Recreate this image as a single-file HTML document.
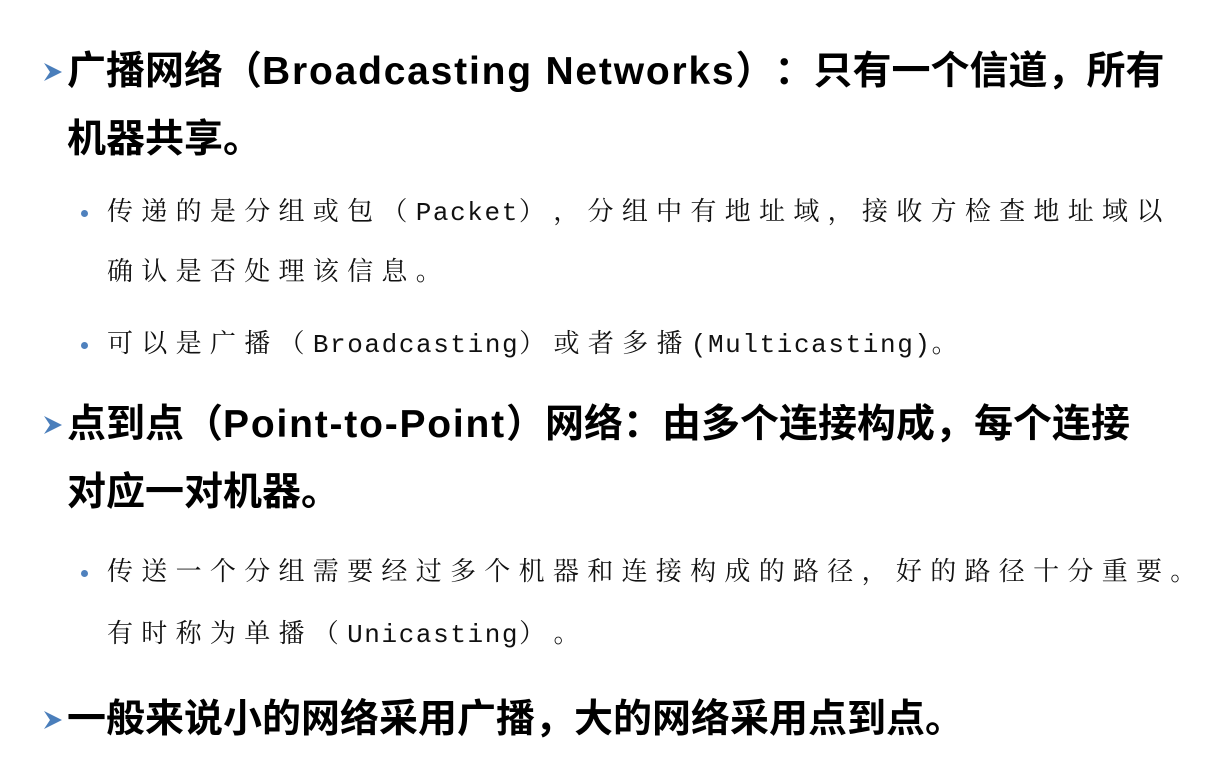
<!DOCTYPE html>
<html><head><meta charset="utf-8"><style>
body{margin:0;width:1222px;height:784px;background:#fff;position:relative;overflow:hidden}
div{text-spacing-trim:space-all}
.h{position:absolute;left:67px;font-family:"Liberation Sans","Noto Sans CJK SC",sans-serif;font-weight:bold;font-size:39px;line-height:50px;color:#000;white-space:nowrap}
.h i{font-style:normal;letter-spacing:1.8px}
.s{position:absolute;left:107px;font-family:"Liberation Mono","Noto Serif CJK SC",serif;font-size:26px;line-height:40px;letter-spacing:8.3px;color:#111;white-space:nowrap}
.s i{font-style:normal;letter-spacing:1.6px}
.ar{position:absolute;left:43px;width:20px;height:20px}
.dot{position:absolute;left:81px;width:7px;height:7px;border-radius:50%;background:#4f81bd}
</style></head><body>
<svg class="ar" style="top:62px" viewBox="0 0 20 20"><polygon points="1,1 19,10 1,19 7,10" fill="#4a7ebb"/></svg>
<div class="h" style="top:47px">广播网络（<i>Broadcasting Networks</i>）：只有一个信道，所有</div>
<div class="h" style="top:115px">机器共享。</div>
<div class="dot" style="top:210px"></div>
<div class="s" style="top:193px">传递的是分组或包（<i>Packet</i>），分组中有地址域，接收方检查地址域以</div>
<div class="s" style="top:253px">确认是否处理该信息。</div>
<div class="dot" style="top:342px"></div>
<div class="s" style="top:325px">可以是广播（<i>Broadcasting</i>）或者多播<i>(Multicasting)</i>。</div>
<svg class="ar" style="top:415px" viewBox="0 0 20 20"><polygon points="1,1 19,10 1,19 7,10" fill="#4a7ebb"/></svg>
<div class="h" style="top:400px">点到点（<i>Point-to-Point</i>）网络：由多个连接构成，每个连接</div>
<div class="h" style="top:468px">对应一对机器。</div>
<div class="dot" style="top:570px"></div>
<div class="s" style="top:553px">传送一个分组需要经过多个机器和连接构成的路径，好的路径十分重要。</div>
<div class="s" style="top:615px">有时称为单播（<i>Unicasting</i>）。</div>
<svg class="ar" style="top:710px" viewBox="0 0 20 20"><polygon points="1,1 19,10 1,19 7,10" fill="#4a7ebb"/></svg>
<div class="h" style="top:695px">一般来说小的网络采用广播，大的网络采用点到点。</div>
</body></html>
